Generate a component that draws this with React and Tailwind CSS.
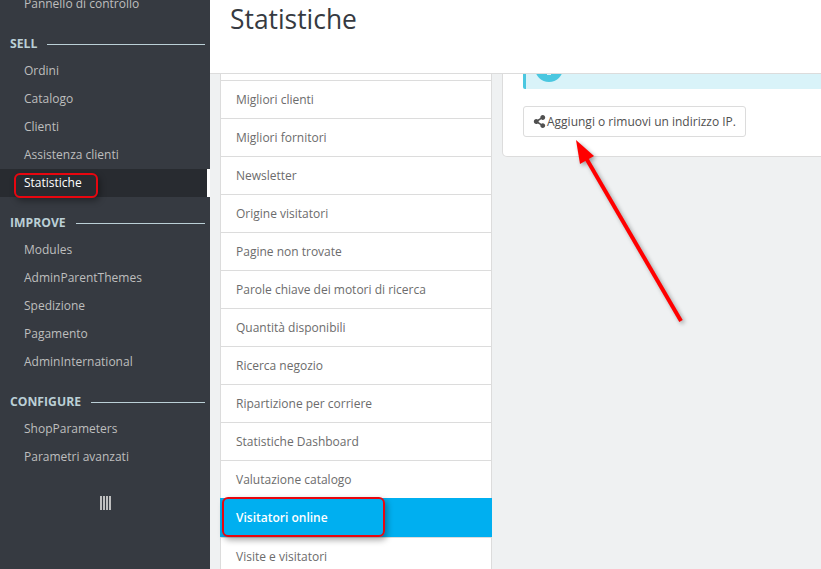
import React from "react";
import { FaShareAlt } from "react-icons/fa";

const SECTIONS = [
  { title: "SELL", items: ["Ordini", "Catalogo", "Clienti", "Assistenza clienti", "Statistiche"] },
  { title: "IMPROVE", items: ["Modules", "AdminParentThemes", "Spedizione", "Pagamento", "AdminInternational"] },
  { title: "CONFIGURE", items: ["ShopParameters", "Parametri avanzati"] },
];

const REPORTS = [
  "Migliori clienti",
  "Migliori fornitori",
  "Newsletter",
  "Origine visitatori",
  "Pagine non trovate",
  "Parole chiave dei motori di ricerca",
  "Quantità disponibili",
  "Ricerca negozio",
  "Ripartizione per corriere",
  "Statistiche Dashboard",
  "Valutazione catalogo",
  "Visitatori online",
  "Visite e visitatori",
];

function Sidebar() {
  return (
    <aside className="w-[210px] shrink-0 bg-[#363a41] text-[12px] text-[#bebebe]">
      <div className="-mt-[10px] flex h-7 items-center pl-[24px]">Pannello di controllo</div>
      {SECTIONS.map(s => (
        <div key={s.title}>
          <div className="flex h-[39px] items-start gap-[10px] pl-[10px] pr-[5px] pt-[17px]">
            <span className="text-[12.2px] leading-[18px] font-bold text-[#bbcfd6]">{s.title}</span>
            <span className="mt-[9px] h-px flex-1 bg-[#bbcfd6]" />
          </div>
          {s.items.map(i => (
            <div key={i} className={`flex h-7 items-center pl-[24px] ${i === "Statistiche" ? "border-r-[3px] border-white bg-[#282b30] text-white" : ""}`}>
              {i}
            </div>
          ))}
        </div>
      ))}
      <div className="mt-[25px] flex justify-center gap-px pl-[1px]">
        <span className="h-[14px] w-[2px] bg-[#bebebe]" />
        <span className="h-[14px] w-[2px] bg-[#bebebe]" />
        <span className="h-[14px] w-[2px] bg-[#bebebe]" />
        <span className="h-[14px] w-[2px] bg-[#bebebe]" />
      </div>
    </aside>
  );
}

function ReportList() {
  return (
    <div className="w-[272px] shrink-0 border-x border-[#dcdcdc] bg-white pt-[6px] text-[12px] text-[#6c6c6c]">
      {REPORTS.map(r => (
        <div
          key={r}
          className={`flex h-[38px] items-center border-t border-[#dcdcdc] pl-[15px] pt-[1px] ${r === "Visitatori online" ? "-mx-px h-[39px] border-t-0 bg-[#00aff0] pl-[16px] font-semibold text-white" : ""}`}
        >
          {r}
        </div>
      ))}
    </div>
  );
}

function Panel() {
  return (
    <div className="-mr-1 h-[83px] flex-1 rounded-bl-[5px] border-x border-b border-[#dcdcdc] bg-white pl-[20px]">
      <div className="relative h-[15px] overflow-hidden rounded-bl-[2px] border-l-[3px] border-[#4ac7e0] bg-[#d9f3f9]">
        <span className="absolute -top-[20px] left-[9px] h-[28px] w-[28px] rounded-full bg-[#4ac7e0]" />
        <span className="absolute left-[21px] top-0 h-[1px] w-[4px] bg-[#d9f3f9]" />
      </div>
      <button className="mt-[17px] flex h-[31px] w-[223px] items-center gap-px whitespace-nowrap rounded-[3px] border border-[#dcdcdc] bg-white pl-[9px] text-[12px] text-[#505050]">
        <FaShareAlt size={13} className="shrink-0 text-[#505050]" />
        Aggiungi o rimuovi un indirizzo IP.
      </button>
    </div>
  );
}

export default function App() {
  return (
    <div className="relative flex h-[569px] w-[821px] overflow-hidden bg-[#eff1f2] font-['Open_Sans',sans-serif]">
      <Sidebar />
      <div className="flex min-w-0 flex-1 flex-col">
        <header className="h-[74px] shrink-0 border-b border-[#dcdcdc] bg-white pl-[20px] pt-[1px]">
          <h1 className="text-[26.4px] leading-[36px] text-[#363a41]">Statistiche</h1>
        </header>
        <div className="flex min-h-0 flex-1 gap-[10px] pl-[10px]">
          <ReportList />
          <Panel />
        </div>
      </div>

      {/* annotazioni rosse sopra lo screenshot */}
      <div className="absolute left-[14px] top-[173px] h-[25px] w-[84px] rounded-[6px] border-2 border-[#e8060f] shadow-[2px_3px_6px_rgba(0,0,0,0.35)]" />
      <div className="absolute left-[222px] top-[497px] h-[40px] w-[163px] rounded-[6px] border-2 border-[#e8060f] shadow-[2px_3px_6px_rgba(0,0,0,0.35)]" />
      <svg className="absolute left-0 top-0 drop-shadow-[2px_2px_2px_rgba(0,0,0,0.35)]" width="821" height="569">
        <line x1="681" y1="321" x2="586" y2="158" stroke="#ff0000" strokeWidth="4" />
        <polygon points="576,140 594,156 580,164" fill="#ff0000" />
      </svg>
    </div>
  );
}
